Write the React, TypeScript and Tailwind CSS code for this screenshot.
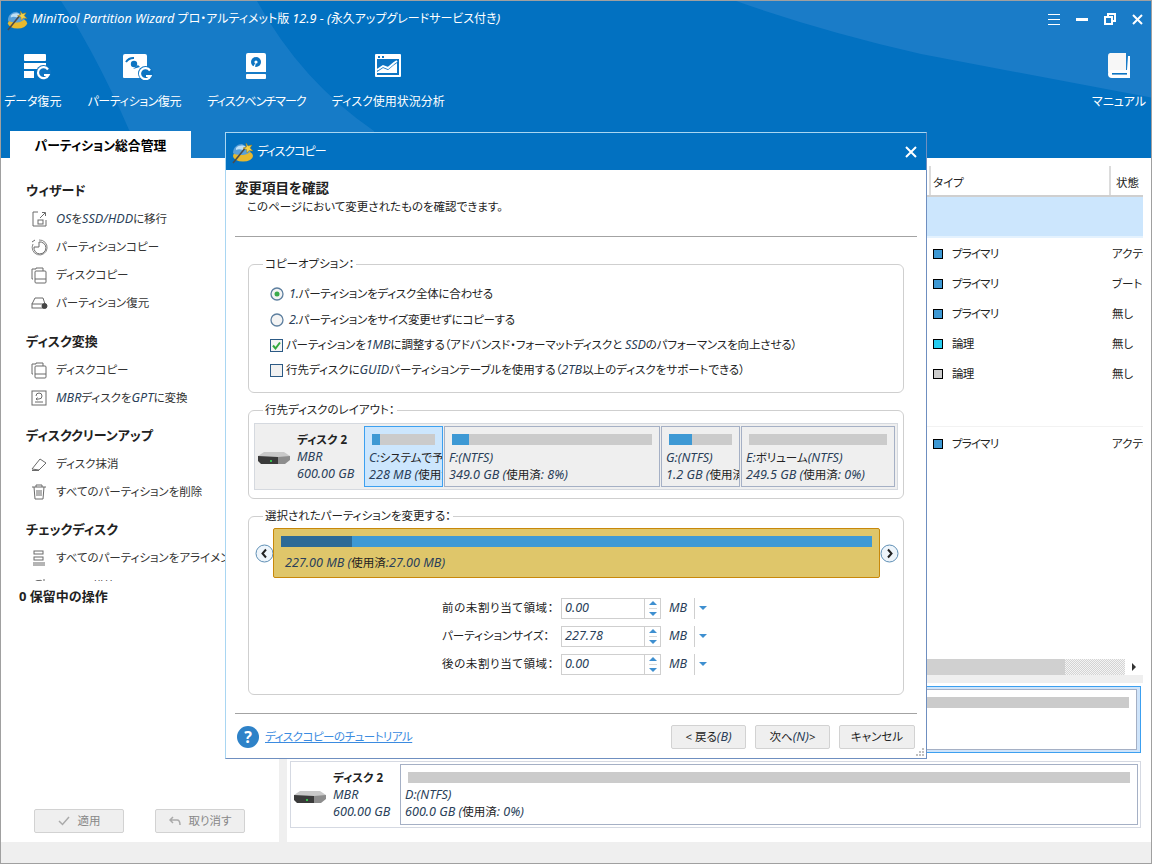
import type { ReactNode } from "react";

// latin runs are italic in the original, kana/kanji stay upright
const L = ({ children }: { children: ReactNode }) => (
  <i className="text-[12.6px] italic text-[#2a3f5a]">{children}</i>
);

const Wizard = ({ size }: { size: number }) => (
  <svg width={size} height={size} viewBox="0 0 24 24">
    <ellipse cx="12" cy="16" rx="10" ry="5.500" fill="#e8b92e" />
    <path d="M2 13 C2 7 7 4 11 4 L20 9 C20 13 15 15 10 15 C6 15 3 14 2 13Z" fill="#5aa0d8" />
    <path d="M5 8 C8 5 12 5 15 7 L12 10 C9 9 7 9 5 10Z" fill="#bfe0f5" />
    <path d="M2 23 L15 7" stroke="#4a4a4a" strokeWidth="1.6" />
    <path d="M15 3 L17 6 L21 5 L19 8 L22 11 L18 10.5 L16 13 L15.5 9.5 L12 8 L15.5 7Z" fill="#f4d24a" stroke="#a07a10" strokeWidth="0.5" />
  </svg>
);

const Refresh = () => (
  <g fill="none" stroke="#fff" strokeWidth="2.2">
    <path d="M29 21.5 A5.5 5.5 0 1 0 29.5 27 H25" />
  </g>
);

const IconData = () => (
  <svg width="28" height="28" viewBox="0 0 28 28" fill="#fff" className="ml-[8px]">
    <rect x="1" y="2" width="22" height="7" rx="1" />
    <rect x="1" y="11" width="22" height="6" />
    <rect x="1" y="19" width="10" height="7" />
    <g transform="translate(-4 -4)"><circle cx="24.500" cy="24.500" r="7.500" fill="#0d74c2" /><Refresh /></g>
  </svg>
);

const IconPartition = () => (
  <svg width="32" height="28" viewBox="0 0 32 28" className="ml-[6px]">
    <path d="M2 4 a2 2 0 0 1 2-2 H24 a2 2 0 0 1 2 2 V26 H3 a1 1 0 0 1-1-1Z" fill="#fff" />
    <circle cx="13" cy="12" r="3.2" fill="#0d74c2" />
    <path d="M5 10 A9 9 0 0 1 13 6" fill="none" stroke="#0d74c2" strokeWidth="2" />
    <path d="M12 17 L17 13 L19 15 Z" fill="#0d74c2" />
    <g transform="translate(0 -3)"><circle cx="24.500" cy="24.500" r="7.500" fill="#0d74c2" /><Refresh /></g>
  </svg>
);

const IconBench = () => (
  <svg width="22" height="28" viewBox="0 0 22 28" fill="#fff">
    <path d="M3 1 H19 a2 2 0 0 1 2 2 V20 H1 V3 a2 2 0 0 1 2-2Z" />
    <rect x="1" y="22" width="20" height="5" rx="1" />
    <circle cx="11" cy="10" r="5" fill="#0d74c2" />
    <circle cx="11" cy="10" r="1.6" fill="#fff" />
    <path d="M11 10 L8 15 L10 15.5Z" fill="#fff" />
  </svg>
);

const IconChart = () => (
  <svg width="26" height="24" viewBox="0 0 26 24">
    <rect x="0" y="0" width="26" height="23" rx="1" fill="#fff" />
    <rect x="2" y="5" width="22" height="16" fill="#0d74c2" />
    <rect x="3" y="2" width="2" height="2" fill="#0d74c2" />
    <rect x="7" y="2" width="2" height="2" fill="#0d74c2" />
    <path d="M2 18 L8 14 L13 16 L19 11 L22 9 V19 H2Z" fill="#fff" />
    <path d="M2 15 L8 11 L13 13 L19 8 L22 6" fill="none" stroke="#fff" strokeWidth="2" transform="translate(0 1)" />
  </svg>
);

const IconBook = () => (
  <svg width="24" height="26" viewBox="0 0 24 26" fill="#fff">
    <path d="M3 0 H19 V18 H4 a3 3 0 0 0-3 3 V3 a3 3 0 0 1 2-3Z" fill="#f7f7f7" />
    <path d="M21 3 H23 V25 H5 a4 4 0 0 1-4-4 a4 4 0 0 1 4-4 H20Z" fill="#fff" />
    <rect x="5" y="20" width="15" height="1.6" fill="#0d74c2" />
  </svg>
);

const Hdd = () => (
  <svg width="32" height="12" viewBox="0 0 32 12">
    <path d="M6 0 H26 L32 4 V7 H0 V4Z" fill="#c9c9c9" />
    <path d="M0 4 L20 5 L20 12 L3 12 L0 9Z" fill="#3a3a3a" />
    <path d="M20 5 L32 4 V8 L27 12 H20Z" fill="#8d8d8d" />
    <rect x="12" y="8" width="2" height="2" fill="#34c04a" />
  </svg>
);

const Side = ({ d }: { d: ReactNode }) => (
  <svg width="18" height="18" viewBox="0 0 18 18" fill="none" stroke="#6a6a6a" strokeWidth="1">
    {d}
  </svg>
);

const migrateIcon = (
  <>
    <path d="M8 2 H3 V16 H16 V10" />
    <rect x="8" y="10" width="5" height="4" />
    <path d="M10 8 L15 3 M12 2.500 H15.500 V6" />
  </>
);
const partCopyIcon = (
  <>
    <path d="M3 6 A7.500 7.500 0 1 0 9 2" stroke="#888" />
    <path d="M9 4 A6 6 0 1 1 4 9 H9Z" />
    <path d="M2 4 L5 2" />
  </>
);
const diskCopyIcon = (
  <>
    <path d="M6 3 V2 H13 V5 M3 13 H2 V3 H6" />
    <rect x="5" y="5" width="11" height="12" rx="1" />
    <path d="M5 13 H16" />
  </>
);
const recoverIcon = (
  <>
    <path d="M2 10 L5 4 H13 L15 10" />
    <rect x="2" y="10" width="11" height="4" fill="#fff" />
    <circle cx="14.500" cy="12" r="2.500" fill="#444" stroke="#444" />
  </>
);
const convertIcon = (
  <>
    <rect x="2" y="2" width="14" height="14" />
    <path d="M6 7 A3 3 0 1 1 9 10 H6 M7.500 8.500 L6 10 L7.500 11 M5 13 H13" />
  </>
);
const eraseIcon = (
  <>
    <path d="M2 14 L10 4 L16 8 L9 15Z" />
    <path d="M2 15.500 H9" />
  </>
);
const trashIcon = (
  <>
    <path d="M2 4 H16 M6 4 V2 H12 V4 M4 4 L5 16 H13 L14 4 M7 7 V13 M9 7 V13 M11 7 V13" />
  </>
);
const alignIcon = (
  <>
    <rect x="4" y="2" width="9" height="3" />
    <rect x="4" y="8" width="9" height="3" />
    <path d="M3 14 H15 M3 16 H15" />
  </>
);
const rebuildIcon = (
  <>
    <path d="M3 10 A6 6 0 0 1 14 6 M14 2 V6 H10" />
  </>
);

const groups: { title: string; items: { icon: ReactNode; label: ReactNode }[] }[] = [
  {
    title: "ウィザード",
    items: [
      { icon: migrateIcon, label: <><L>OS</L>を<L>SSD/HDD</L>に移行</> },
      { icon: partCopyIcon, label: "パーティションコピー" },
      { icon: diskCopyIcon, label: "ディスクコピー" },
      { icon: recoverIcon, label: "パーティション復元" },
    ],
  },
  {
    title: "ディスク変換",
    items: [
      { icon: diskCopyIcon, label: "ディスクコピー" },
      { icon: convertIcon, label: <><L>MBR</L>ディスクを<L>GPT</L>に変換</> },
    ],
  },
  {
    title: "ディスククリーンアップ",
    items: [
      { icon: eraseIcon, label: "ディスク抹消" },
      { icon: trashIcon, label: "すべてのパーティションを削除" },
    ],
  },
  {
    title: "チェックディスク",
    items: [
      { icon: alignIcon, label: "すべてのパーティションをアライメント" },
      { icon: rebuildIcon, label: <><L>MBR</L>再構築</> },
    ],
  },
];

const rows = [
  { color: "bg-[#3e99d4]", type: "プライマリ", state: "アクティブ" },
  { color: "bg-[#3e99d4]", type: "プライマリ", state: "ブート" },
  { color: "bg-[#3e99d4]", type: "プライマリ", state: "無し" },
  { color: "bg-[#27cdf0]", type: "論理", state: "無し" },
  { color: "bg-[#cccccc]", type: "論理", state: "無し" },
];

const Row = ({ color, type, state }: { color: string; type: string; state: string }) => (
  <div className="flex h-[30px] items-center">
    <div className="flex w-[179px] items-center pl-[2px]">
      <span className={`h-[10px] w-[10px] border border-black ${color}`} />
      <span className="ml-[9px] tracking-[-0.8px]">{type}</span>
    </div>
    <div className="w-[33px] overflow-hidden whitespace-nowrap pl-[2px]">{state}</div>
  </div>
);

const Tool = ({ icon, label, tight }: { icon: ReactNode; label: string; tight?: string }) => (
  <div className="flex flex-col items-center">
    <div className="flex h-[32px] items-center">{icon}</div>
    <div className={`mt-[12px] whitespace-nowrap text-[12px] leading-[16px] text-white ${tight ?? ""}`}>{label}</div>
  </div>
);

const Bar = ({ fill, className }: { fill: number; className: string }) => (
  <div className={`h-[11px] bg-[#cbcbcb] ${className}`}>
    <div className="h-full bg-[#3e99d4]" style={{ width: fill }} />
  </div>
);

const Part = ({ fill, name, size, className }: { fill: number; name: ReactNode; size: ReactNode; className: string }) => (
  <div className={`overflow-hidden whitespace-nowrap border px-[4px] pt-[7px] ${className}`}>
    <Bar fill={fill} className="mx-[3px]" />
    <div className="mt-[4px] leading-[17px]">{name}</div>
    <div className="leading-[17px]">{size}</div>
  </div>
);

const Spin = ({ label, value, wide }: { label: string; value: string; wide?: boolean }) => (
  <div className="flex h-[28px] items-center">
    <div className={`w-[119px] whitespace-nowrap ${wide ? "tracking-[0.6px]" : ""}`}>{label}</div>
    <div className="flex h-[21px] w-[100px] items-center border border-[#cfcfcf]">
      <div className="flex-1 pl-[3px]"><L>{value}</L></div>
      <div className="flex h-full w-[16px] flex-col items-center justify-center gap-[3px] border-l border-[#cfcfcf]">
        <span className="h-0 w-0 border-x-[4px] border-b-[4px] border-x-transparent border-b-[#3e8fd0]" />
        <span className="h-[1px] w-[8px] bg-[#d8d8d8]" />
        <span className="h-0 w-0 border-x-[4px] border-t-[4px] border-x-transparent border-t-[#3e8fd0]" />
      </div>
    </div>
    <div className="ml-[8px] w-[25px]"><L>MB</L></div>
    <div className="h-[21px] w-px bg-[#cfcfcf]" />
    <span className="ml-[4px] h-0 w-0 border-x-[4px] border-t-[4px] border-x-transparent border-t-[#3e8fd0]" />
  </div>
);

const Btn = ({ children, className }: { children: ReactNode; className: string }) => (
  <button className={`flex h-[24px] items-center justify-center rounded-[2px] border border-[#d2d2d2] bg-[#efefef] ${className}`}>
    {children}
  </button>
);

const NavCircle = ({ d }: { d: string }) => (
  <svg width="19" height="19" viewBox="0 0 19 19" className="shrink-0">
    <circle cx="9.5" cy="9.5" r="8.500" fill="#eef5fb" stroke="#5f8fb5" />
    <path d={d} fill="none" stroke="#222" strokeWidth="2" />
  </svg>
);

function Dialog() {
  return (
    <div className="absolute left-[224px] top-[131px] flex h-[627px] w-[702px] flex-col border border-[#a9d6f2] border-b-[#6f8fc0] border-r-[#6f8fc0] bg-white">
      <div className="flex h-[37px] shrink-0 items-center bg-[#0271c1] pl-[5px] pr-[9px]">
        <Wizard size={24} />
        <span className="ml-[2px] text-[12px] tracking-[-1px] text-white">ディスクコピー</span>
        <svg width="12" height="12" viewBox="0 0 12 12" className="ml-auto" stroke="#fff" strokeWidth="2">
          <path d="M1 1 L11 11 M11 1 L1 11" />
        </svg>
      </div>

      <div className="px-[9px] pt-[9px]">
        <div className="text-[13.5px] font-bold leading-[18px]">変更項目を確認</div>
        <div className="pl-[12px] leading-[20px]">このページにおいて変更されたものを確認できます。</div>
        <div className="mt-[19px] h-px bg-[#a3a3a3]" />
      </div>

      <div className="px-[22px]">
        <fieldset className="mt-[19px] h-[137px] rounded-[6px] border border-[#cfcfcf]">
          <legend className="ml-[14px] px-[2px] leading-[16px]">コピーオプション：</legend>
          <div className="mt-[9px] pl-[21px]">
            <div className="flex h-[26px] items-center">
              <svg width="14" height="14" viewBox="0 0 14 14">
                <circle cx="7" cy="7" r="6" fill="#f4f4f4" stroke="#5d7f9f" strokeWidth="1.300" />
                <circle cx="7" cy="7" r="2.500" fill="#3aaa4a" />
              </svg>
              <span className="ml-[5px] tracking-[-0.25px]"><L>1.</L>パーティションをディスク全体に合わせる</span>
            </div>
            <div className="flex h-[26px] items-center">
              <svg width="14" height="14" viewBox="0 0 14 14">
                <circle cx="7" cy="7" r="6" fill="#f4f4f4" stroke="#5d7f9f" strokeWidth="1.300" />
              </svg>
              <span className="ml-[5px] tracking-[-0.25px]"><L>2.</L>パーティションをサイズ変更せずにコピーする</span>
            </div>
            <div className="flex h-[24px] items-center">
              <svg width="13" height="13" viewBox="0 0 13 13">
                <rect x="0.500" y="0.500" width="12" height="12" fill="#f4f4f4" stroke="#2c5a85" />
                <path d="M3 6.500 L5.500 9.500 L10 3.500" fill="none" stroke="#32a83c" strokeWidth="2" />
              </svg>
              <span className="ml-[3px] tracking-[-0.13px]">パーティションを<L>1MB</L>に調整する（アドバンスド・フォーマットディスクと <L>SSD</L>のパフォーマンスを向上させる）</span>
            </div>
            <div className="flex h-[26px] items-center">
              <svg width="13" height="13" viewBox="0 0 13 13">
                <rect x="0.500" y="0.500" width="12" height="12" fill="#f1f1f1" stroke="#2c5a85" />
              </svg>
              <span className="ml-[3px]">行先ディスクに<L>GUID</L>パーティションテーブルを使用する（<L>2TB</L>以上のディスクをサポートできる）</span>
            </div>
          </div>
        </fieldset>

        <fieldset className="mt-[9px] h-[97px] rounded-[6px] border border-[#cfcfcf] px-[5px]">
          <legend className="ml-[9px] px-[2px] leading-[16px]">行先ディスクのレイアウト：</legend>
          <div className="mt-[5px] flex h-[67px] w-[644px] items-center border border-[#d5d9df] bg-[#efefef] pr-[2px]">
            <div className="flex h-full w-[109px] shrink-0 items-end pb-[7px] pl-[3px]">
              <div className="pb-[18px]"><Hdd /></div>
              <div className="ml-[7px] leading-[17px]">
                <div className="font-bold">ディスク 2</div>
                <div><L>MBR</L></div>
                <div><L>600.00 GB</L></div>
              </div>
            </div>
            <Part fill={8} className="h-[61px] w-[79px] border-[#3ca0f0] bg-[#cce6fd]" name={<><L>C:</L>システムで予約済み</>} size={<><L>228 MB (</L>使用済</>} />
            <Part fill={17} className="ml-px h-[61px] w-[216px] border-[#a5b0c5]" name={<L>F:(NTFS)</L>} size={<><L>349.0 GB (</L>使用済<L>: 8%)</L></>} />
            <Part fill={23} className="ml-px h-[61px] w-[79px] border-[#a5b0c5]" name={<L>G:(NTFS)</L>} size={<><L>1.2 GB (</L>使用済</>} />
            <Part fill={0} className="ml-px h-[61px] w-[154px] border-[#a5b0c5]" name={<><L>E:</L>ボリューム<L>(NTFS)</L></>} size={<><L>249.5 GB (</L>使用済<L>: 0%)</L></>} />
          </div>
        </fieldset>

        <fieldset className="mt-[9px] h-[187px] rounded-[6px] border border-[#cfcfcf]">
          <legend className="ml-[14px] px-[2px] leading-[16px]">選択されたパーティションを変更する：</legend>
          <div className="mt-[4px] flex items-center pl-[6px]">
            <NavCircle d="M11 5.500 L7.500 9.500 L11 13.500" />
            <div className="z-10 -ml-px h-[50px] w-[607px] shrink-0 rounded-[2px] border border-[#c8880a] bg-[#dfc66a] px-[7px] pt-[7px]">
              <div className="h-[11px] bg-[#3e99d4]">
                <div className="h-full w-[71px] bg-[#2d6a96]" />
              </div>
              <div className="ml-[4px] mt-[8px] leading-[16px]"><L>227.00 MB (</L>使用済<L>:27.00 MB)</L></div>
            </div>
            <NavCircle d="M8 5.500 L11.500 9.500 L8 13.500" />
          </div>
          <div className="mt-[16px] flex flex-col pl-[193px]">
            <Spin label="前の未割り当て領域：" value="0.00" wide />
            <Spin label="パーティションサイズ：" value="227.78" />
            <Spin label="後の未割り当て領域：" value="0.00" wide />
          </div>
        </fieldset>
      </div>

      <div className="mx-[9px] mt-[18px] h-px bg-[#a3a3a3]" />
      <div className="flex items-center pl-[11px] pt-[11px]">
        <span className="flex h-[22px] w-[22px] items-center justify-center rounded-full bg-[#2e82c8] text-[16px] font-bold text-white">?</span>
        <a className="ml-[6px] tracking-[-0.5px] text-[#3b8be0] underline">ディスクコピーのチュートリアル</a>
        <div className="ml-auto mr-[11px] flex gap-[9px]">
          <Btn className="w-[75px]">&lt; 戻る<L>(B)</L></Btn>
          <Btn className="w-[75px]">次へ<L>(N)</L> &gt;</Btn>
          <Btn className="w-[76px]">キャンセル</Btn>
        </div>
      </div>
      <svg width="10" height="9" viewBox="0 0 10 9" fill="#c0c0c0" className="absolute bottom-[1px] right-[1px]">
        <rect x="7" y="0" width="2" height="2" />
        <rect x="4" y="3" width="2" height="2" />
        <rect x="7" y="3" width="2" height="2" />
        <rect x="1" y="6" width="2" height="2" />
        <rect x="4" y="6" width="2" height="2" />
        <rect x="7" y="6" width="2" height="2" />
      </svg>
    </div>
  );
}

export default function App() {
  return (
    <div className="relative flex h-[864px] w-[1152px] flex-col overflow-hidden border border-[#a0a0a0] bg-white font-['Noto_Sans','Noto_Sans_CJK_JP',sans-serif] text-[11.5px] text-[#222] [font-feature-settings:'palt']">
      {/* blue header */}
      <div className="relative h-[157px] shrink-0 bg-[#0271c1]">
        <svg width="1152" height="157" className="absolute left-0 top-0" fill="#1a7cc8">
          <path d="M60 0 H256 Q300 80 373 130 V157 H140 Q100 60 60 0Z" opacity="0.85" />
          <path d="M735 0 H1152 V97 L920 53 Q820 30 735 0Z" />
        </svg>
        <div className="relative flex h-[130px] flex-col">
          <div className="flex h-[36px] items-center pl-[5px] pr-[8px] text-white">
            <Wizard size={23} />
            <span className="ml-[3px] text-[12px]">
              <i className="text-[12.7px] italic">MiniTool Partition Wizard </i>プロ・アルティメット版 <i className="text-[12.7px] italic">12.9 - (</i>永久アップグレードサービス付き<i className="text-[12.7px] italic">)</i>
            </span>
            <div className="ml-auto flex items-center gap-[16px]">
              <svg width="12" height="11" viewBox="0 0 12 11" stroke="#fff"><path d="M0 0.500 H12 M0 5.500 H12 M0 10.500 H12" /></svg>
              <div className="h-[3px] w-[12px] bg-white" />
              <svg width="12" height="12" viewBox="0 0 12 12" fill="none" stroke="#fff" strokeWidth="2"><rect x="1" y="4" width="7" height="7" /><path d="M4 3 V1 H11 V8 H9" /></svg>
              <svg width="11" height="11" viewBox="0 0 11 11" stroke="#fff" strokeWidth="2"><path d="M1 1 L10 10 M10 1 L1 10" /></svg>
            </div>
          </div>
          <div className="mt-[13px] flex items-start gap-[26px] pl-[3px] pr-[5px]">
            <Tool icon={<IconData />} label="データ復元" />
            <Tool icon={<IconPartition />} label="パーティション復元" tight="tracking-[-0.4px]" />
            <Tool icon={<IconBench />} label="ディスクベンチマーク" tight="tracking-[-1px]" />
            <Tool icon={<IconChart />} label="ディスク使用状況分析" />
            <div className="ml-auto"><Tool icon={<IconBook />} label="マニュアル" /></div>
          </div>
        </div>
        <div className="relative ml-[9px] flex h-[27px] w-[181px] items-center justify-center bg-white pt-[2px] text-[12.8px] font-bold text-black">
          パーティション総合管理
        </div>
      </div>

      {/* body */}
      <div className="flex min-h-0 flex-1">
        <aside className="flex w-[278px] shrink-0 flex-col">
          <div className="flex h-[423px] flex-col gap-[14px] overflow-hidden pl-[25px] pt-[23px]">
            {groups.map((g) => (
              <div key={g.title} className="shrink-0 first:mb-px">
                <div className="text-[13px] font-bold leading-[18px]">{g.title}</div>
                <div className="mt-[6px]">
                  {g.items.map((item, i) => (
                    <div key={i} className="flex h-[28px] items-center whitespace-nowrap pl-[4px]">
                      <Side d={item.icon} />
                      <span className="ml-[8px] text-[#333]">{item.label}</span>
                    </div>
                  ))}
                </div>
              </div>
            ))}
          </div>
          <div className="pl-[18px] pt-[6px] text-[13px] font-bold leading-[18px]">0 保留中の操作</div>
          <div className="mt-auto flex gap-[31px] pb-[9px] pl-[33px] text-[#888]">
            <Btn className="w-[90px] gap-[8px] border-[#cccccc] bg-[#ececec]">
              <svg width="12" height="10" viewBox="0 0 12 10" fill="none" stroke="#aaa" strokeWidth="1.500"><path d="M1 5 L4.500 8.500 L11 1" /></svg>
              適用
            </Btn>
            <Btn className="w-[90px] gap-[8px] border-[#cccccc] bg-[#ececec]">
              <svg width="12" height="10" viewBox="0 0 12 10" fill="none" stroke="#aaa" strokeWidth="1.500"><path d="M4 1 L1 4 L4 7 M1 4 H8 Q11 4 11 9" /></svg>
              取り消す
            </Btn>
          </div>
        </aside>
        <div className="w-[8px] shrink-0 bg-[#efefef]" />
        <main className="flex min-w-0 flex-1 flex-col pr-[8px]">
          <div className="flex h-[39px] items-end justify-end border-b-2 border-[#cfcfcf]">
            <div className="flex h-[29px] w-[180px] items-center border-l-2 border-[#dcdcdc] pl-[2px] pt-[4px]">タイプ</div>
            <div className="flex h-[29px] w-[34px] items-center border-l-2 border-[#dcdcdc] pl-[5px] pt-[4px]">状態</div>
          </div>
          <div className="h-[41px] border-b-2 border-[#e4f2fe] bg-[#cce6fd]" />
          <div className="ml-auto mt-px w-[212px]">
            {rows.map((r, i) => (
              <Row key={i} {...r} />
            ))}
          </div>
          <div className="mt-[37px] h-px bg-[#f2f2f2]" />
          <div className="ml-auto mt-[2px] w-[212px]">
            <Row color="bg-[#3e99d4]" type="プライマリ" state="アクティブ" />
          </div>
          <div className="mt-[200px] flex h-[16px] items-center">
            <div className="h-full flex-1 bg-[#d0d0d0]" />
            <div className="h-full w-[60px] bg-[repeating-conic-gradient(#d4d4d4_0_25%,#f4f4f4_0_50%)] bg-[length:2px_2px]" />
            <div className="flex w-[18px] justify-center">
              <span className="h-0 w-0 border-y-[4px] border-l-[4px] border-y-transparent border-l-[#333]" />
            </div>
          </div>
          <div className="h-[8px] bg-[#efefef]" />
          <div className="ml-[3px] mr-[2px] mt-[3px] flex h-[67px] flex-col border border-[#3ca0f0] bg-[#cfe4fa] p-[2px] pr-[3px]">
            <div className="ml-[109px] flex-1 border border-[#a5b0c5] bg-white px-[7px] pt-[7px]">
              <div className="h-[11px] bg-[#cbcbcb]" />
            </div>
          </div>
          <div className="ml-[3px] mr-[2px] mt-[8px] flex h-[67px] items-center border border-[#d5d9e2] bg-white p-[2px]">
            <div className="flex w-[107px] shrink-0 items-center pl-[1px]">
              <div className="mt-[4px]"><Hdd /></div>
              <div className="ml-[7px] leading-[17px]">
                <div className="font-bold">ディスク 2</div>
                <div><L>MBR</L></div>
                <div><L>600.00 GB</L></div>
              </div>
            </div>
            <div className="h-[61px] flex-1 border border-[#a5b0c5] px-[7px] pt-[7px]">
              <div className="h-[11px] bg-[#cbcbcb]" />
              <div className="-ml-[3px] mt-[3px] leading-[17px]"><L>D:(NTFS)</L></div>
              <div className="-ml-[3px] leading-[17px]"><L>600.0 GB (</L>使用済<L>: 0%)</L></div>
            </div>
          </div>
        </main>
      </div>
      <div className="h-[21px] shrink-0 bg-[#efefef]" />

      <Dialog />
    </div>
  );
}
